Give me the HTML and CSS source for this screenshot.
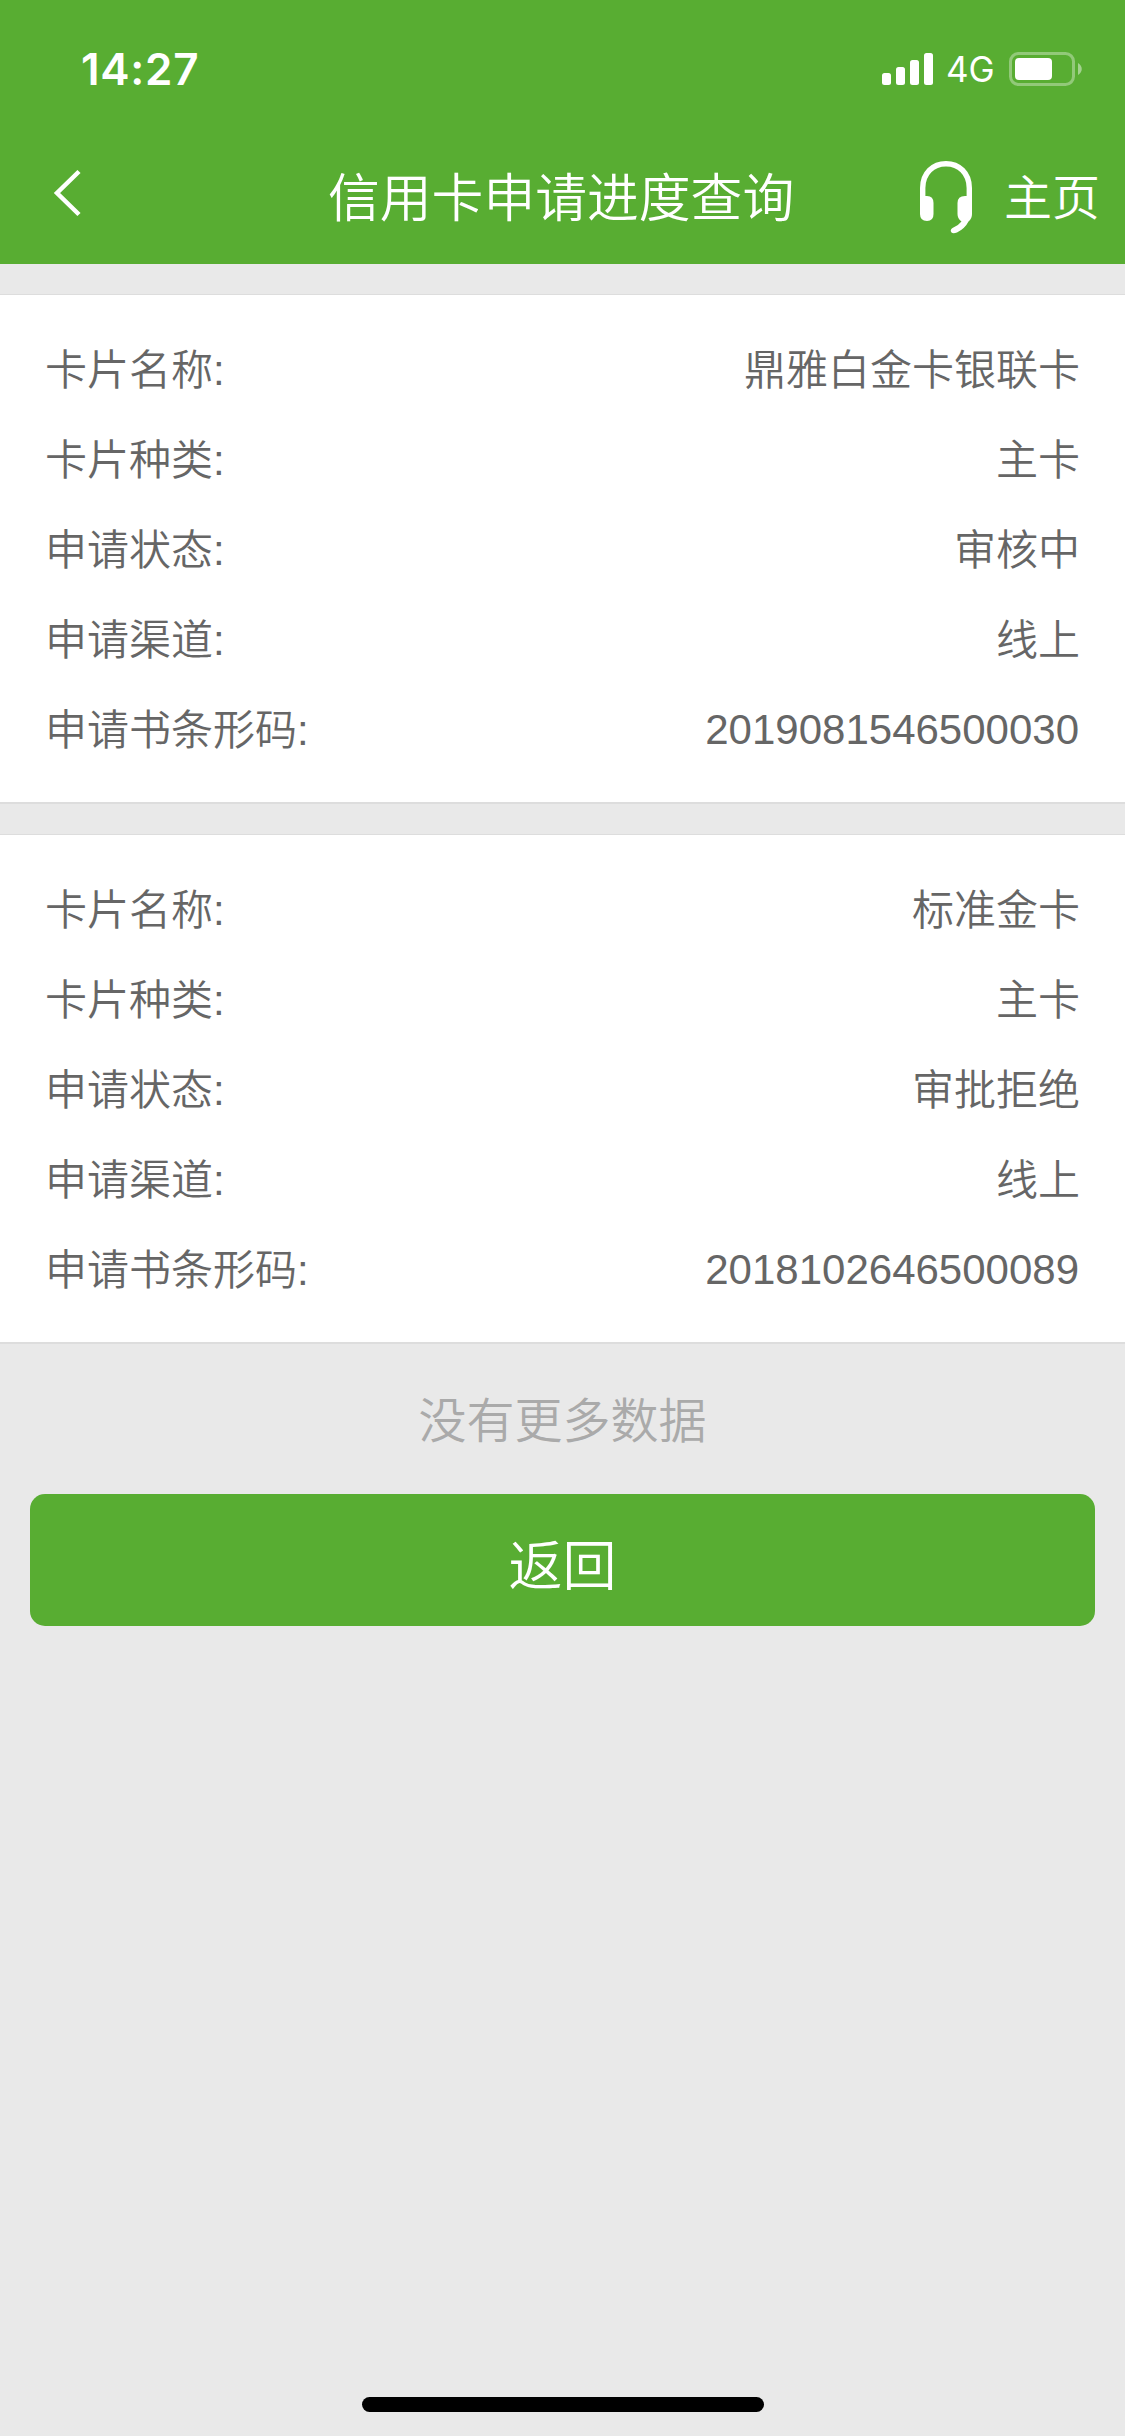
FILE: index.html
```html
<!DOCTYPE html>
<html lang="zh-CN">
<head>
    <meta charset="UTF-8">
    <title>信用卡申请进度查询</title>
    <meta name="viewport" content="width=device-width,initial-scale=1">
    <link rel="stylesheet" href="styles.css">
</head>
<body>
    <header class="header">
        <div class="status-bar">
            <span class="time">14:27</span>
            <div class="status-icons">
                <svg class="signal" width="51" height="33" viewBox="0 0 51 33" fill="#fff">
                    <rect x="0" y="20" width="9" height="12" rx="2.5"/>
                    <rect x="14" y="14" width="9" height="18" rx="2.5"/>
                    <rect x="28" y="7" width="9" height="25" rx="2.5"/>
                    <rect x="42" y="0" width="9" height="32" rx="2.5"/>
                </svg>
                <span class="network">4G</span>
                <svg class="battery" width="74" height="34" viewBox="0 0 74 34">
                    <rect x="1.5" y="1.5" width="63" height="31" rx="8" fill="none" stroke="#fff" stroke-opacity="0.35" stroke-width="3"/>
                    <rect x="6" y="6" width="37" height="22" rx="4" fill="#fff"/>
                    <path d="M69 11 C74 14 74 20 69 23 Z" fill="#fff" fill-opacity="0.45"/>
                </svg>
            </div>
        </div>
        <nav class="navbar">
            <a href="#" class="back">
                <svg width="30" height="48" viewBox="0 0 30 48" fill="none" stroke="#fff" stroke-width="4.5">
                    <path d="M27 2.500 L5 24 L27 45.500"/>
                </svg>
            </a>
            <h1>信用卡申请进度查询</h1>
            <div class="nav-links">
                <a href="#" class="service">
                    <svg width="52" height="73" viewBox="0 0 52 73">
                        <path d="M2.7 44 V27 C2.7 12 13 2.7 26 2.7 S49.3 12 49.3 27 V44" fill="none" stroke="#fff" stroke-width="5.4"/>
                        <path d="M0 35 H7 Q13.5 35 13.5 42 V53 Q13.5 60 7 60 Q0 60 0 53 Z" fill="#fff"/>
                        <path d="M52 35 H45 Q37.5 35 37.5 42 V53 Q37.5 58 41.5 60.500 Q38 65 32.500 67 Q29.500 69 31.500 71.500 Q33 73 37 71.500 Q45 67.500 48.500 60.500 Q52 58 52 53 Z" fill="#fff"/>
                    </svg>
                </a>
                <a href="#" class="home-link">主页</a>
            </div>
        </nav>
    </header>

    <main class="content">
        <section class="card">
            <div class="row"><span>卡片名称:</span><span>鼎雅白金卡银联卡</span></div>
            <div class="row"><span>卡片种类:</span><span>主卡</span></div>
            <div class="row"><span>申请状态:</span><span>审核中</span></div>
            <div class="row"><span>申请渠道:</span><span>线上</span></div>
            <div class="row"><span>申请书条形码:</span><span class="number">2019081546500030</span></div>
        </section>
        <section class="card">
            <div class="row"><span>卡片名称:</span><span>标准金卡</span></div>
            <div class="row"><span>卡片种类:</span><span>主卡</span></div>
            <div class="row"><span>申请状态:</span><span>审批拒绝</span></div>
            <div class="row"><span>申请渠道:</span><span>线上</span></div>
            <div class="row"><span>申请书条形码:</span><span class="number">2018102646500089</span></div>
        </section>
        <p class="no-more">没有更多数据</p>
        <button class="return-btn">返回</button>
    </main>

    <div class="home-bar"></div>
</body>
</html>
```
FILE: styles.css
```css
* {
    margin: 0;
    padding: 0;
    box-sizing: border-box;
}

body {
    display: flex;
    flex-direction: column;
    min-height: 2436px;
    background: #e9e9e9;
    color: #666;
    font-family: "Liberation Sans", "Noto Sans CJK SC", sans-serif;
    font-size: 42px;
    font-weight: 350;
}

/* Header */
.header {
    height: 264px;
    background: #58ad32;
    color: #fff;
}

.status-bar {
    display: flex;
    justify-content: space-between;
    align-items: center;
    height: 132px;
    padding: 6px 42px 0 81px;
    font-family: Inter, sans-serif;
    font-weight: 400;
}

.time {
    font-size: 44px;
    font-weight: 600;
    letter-spacing: 0.7px;
}

.status-icons {
    display: flex;
    align-items: center;
}

.network {
    width: 76px;
    padding-left: 13px;
    font-size: 35px;
}

.navbar {
    display: grid;
    grid-template-columns: 328px 1fr 327px;
    align-items: center;
    height: 132px;
}

.navbar a {
    color: #fff;
    text-decoration: none;
}

.back {
    padding: 0 0 10px 52px;
}

.back svg,
.service svg {
    display: block;
}

h1 {
    padding-top: 2px;
    font-size: 51.8px;
    font-weight: 350;
    line-height: 130px;
    white-space: nowrap;
}

.nav-links {
    display: flex;
    align-items: center;
    justify-content: flex-end;
    gap: 32px;
    padding-right: 25px;
    font-size: 48px;
}

.service {
    padding-bottom: 2px;
}

.home-link {
    padding-bottom: 9px;
}

/* Application cards */
.content {
    padding-top: 30px;
}

.card {
    height: 510px;
    margin-bottom: 30px;
    padding: 30px 45px 0;
    background: #fff;
    border-top: 1px solid #ddd;
    border-bottom: 2px solid #ddd;
}

.row {
    display: flex;
    justify-content: space-between;
    align-items: center;
    height: 90px;
    padding-bottom: 8px;
}

.number {
    padding-top: 8px;
    padding-right: 1px;
}

.no-more {
    height: 120px;
    line-height: 96px;
    text-align: center;
    font-size: 48px;
    color: #aaa;
}

.return-btn {
    display: block;
    width: 1065px;
    height: 132px;
    margin: 0 auto;
    padding-top: 4px;
    border: none;
    border-radius: 15px;
    background: #58ad32;
    color: #fff;
    font-family: inherit;
    font-size: 54px;
    font-weight: 350;
}

.home-bar {
    width: 402px;
    height: 15px;
    margin: auto auto 24px;
    border-radius: 8px;
    background: #000;
}
```
